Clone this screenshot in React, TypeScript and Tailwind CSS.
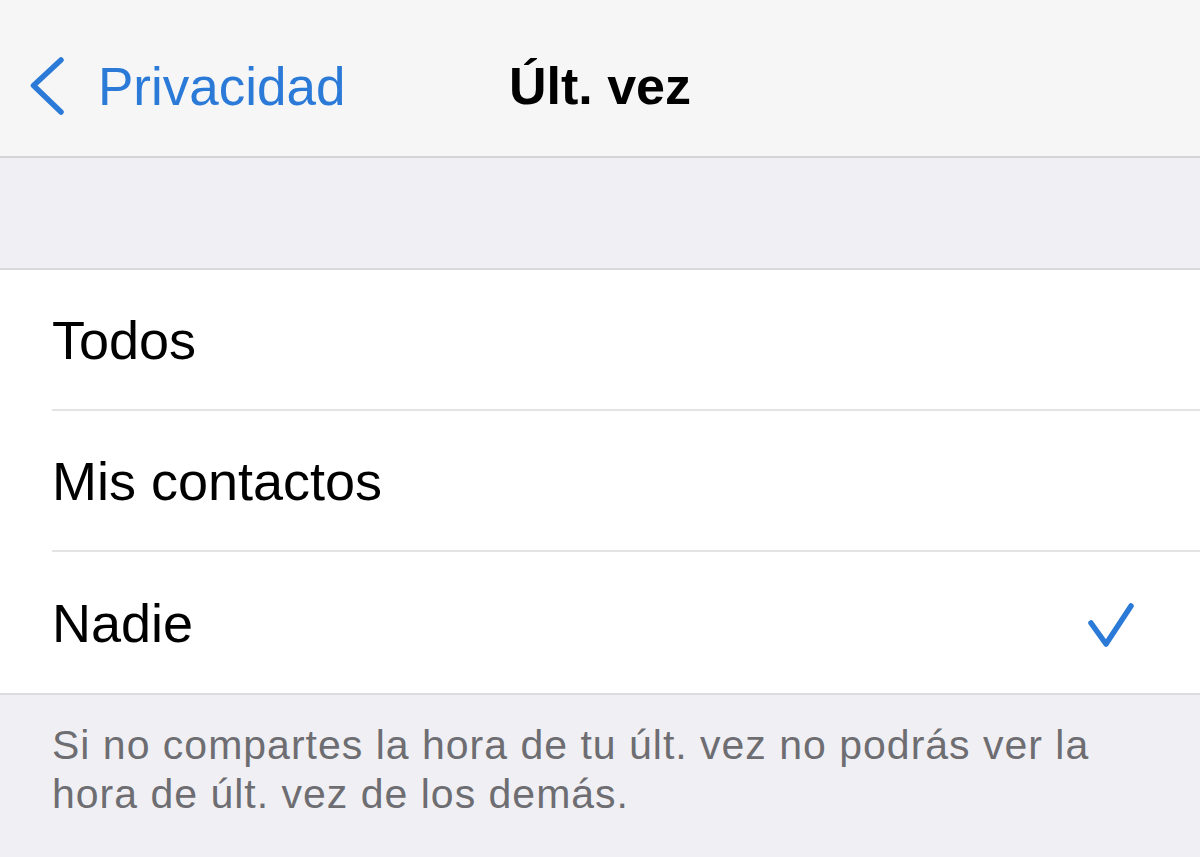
import React from "react";

const font = { fontFamily: '"Liberation Sans", Arial, sans-serif' };

function Row({ label, checked, last }: { label: string; checked?: boolean; last?: boolean }) {
  return (
    <div className="pl-[52px]">
      <div
        className={
          "flex h-[141px] items-center justify-between pr-[66px] " +
          (last ? "" : "border-b-2 border-[#e3e3e5]")
        }
      >
        <span className="text-[54px] leading-none text-black">{label}</span>
        {checked && (
          <svg width="48" height="48" viewBox="0 0 48 48" className="mr-[-1px] mt-[6px]">
            <path
              d="M4 21 L19 42 L44 4"
              fill="none"
              stroke="#2b7ad8"
              strokeWidth="5.5"
              strokeLinecap="round"
              strokeLinejoin="round"
            />
          </svg>
        )}
      </div>
    </div>
  );
}

export default function App() {
  return (
    <div className="h-[857px] w-[1200px] overflow-hidden bg-[#f0f0f4]" style={font}>
      <header className="grid h-[158px] grid-cols-[1fr_auto_1fr] items-center border-b-2 border-[#d4d4d7] bg-[#f6f6f7] pt-[16px]">
        <div className="flex items-center pl-[30px]">
          <svg width="36" height="58" viewBox="0 0 36 58">
            <path
              d="M31 3 L3.5 28.5 L31 55"
              fill="none"
              stroke="#2b7ad8"
              strokeWidth="5.5"
              strokeLinecap="round"
              strokeLinejoin="round"
            />
          </svg>
          <span className="ml-[32px] text-[53px] leading-none text-[#2b7ad8]">Privacidad</span>
        </div>
        <div className="text-[52px] font-bold leading-none text-black">Últ. vez</div>
        <div />
      </header>
      <div className="h-[112px] border-b-2 border-[#d9d9dc]" />
      <section className="border-b-2 border-[#dcdcde] bg-white">
        <Row label="Todos" />
        <Row label="Mis contactos" />
        <Row label="Nadie" checked last />
      </section>
      <p className="pl-[52px] pr-[80px] pt-[26px] text-[41px] leading-[49px] tracking-[1px] text-[#6d6d72]">
        Si no compartes la hora de tu últ. vez no podrás ver la hora de últ. vez de los demás.
      </p>
    </div>
  );
}
